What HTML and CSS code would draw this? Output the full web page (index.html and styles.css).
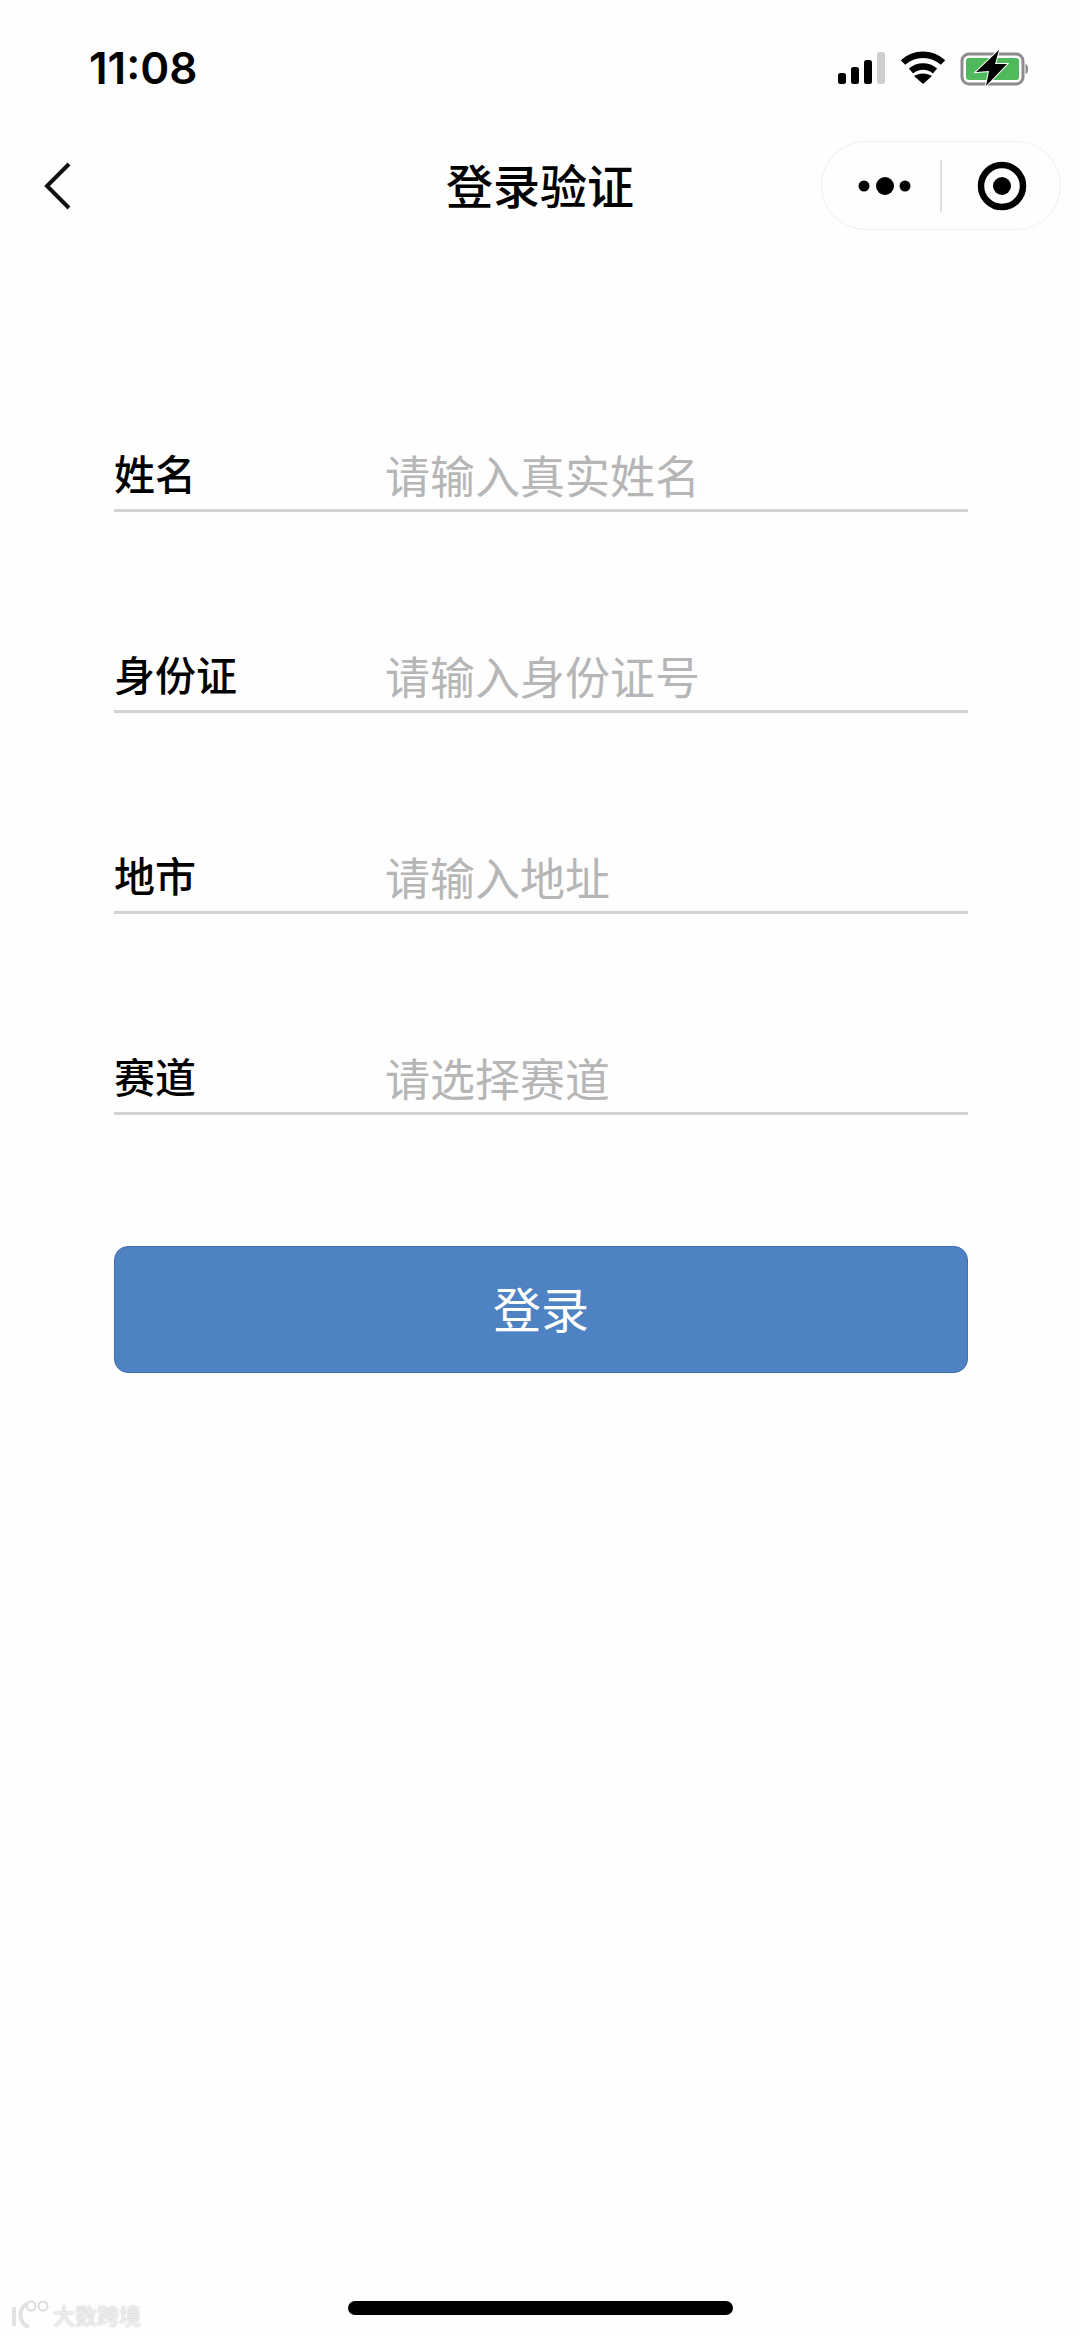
FILE: index.html
```html
<!DOCTYPE html>
<html lang="zh-CN">
<head>
    <meta charset="UTF-8">
    <meta name="viewport" content="width=device-width, initial-scale=1.0">
    <title>登录验证</title>
    <link rel="stylesheet" href="styles.css">
</head>
<body>

    <div class="page">
        <!-- Barra de estado -->
        <div class="status-bar">
            <span class="time">11:08</span>
            <div class="status-icons">
                <svg class="signal" width="48" height="32" viewBox="0 0 48 32">
                    <rect x="0" y="21" width="8" height="11" rx="2.5" fill="#000"/>
                    <rect x="13" y="15" width="8" height="17" rx="2.5" fill="#000"/>
                    <rect x="26" y="8" width="8" height="24" rx="2.5" fill="#000"/>
                    <rect x="39" y="0" width="8" height="32" rx="2.5" fill="#cfcfcf"/>
                </svg>
                <svg class="wifi" width="46" height="36" viewBox="0 0 46 36">
                    <path d="M3 12.5C14 2 32 2 43 12.5" fill="none" stroke="#000" stroke-width="6.5"/>
                    <path d="M11 21C18 15 28 15 35 21" fill="none" stroke="#000" stroke-width="6.5"/>
                    <path d="M23 34L14 26C19 22.500 27 22.500 32 26Z" fill="#000"/>
                </svg>
                <svg class="battery" width="72" height="38" viewBox="0 0 72 38">
                    <rect x="2" y="5" width="61" height="30" rx="7" fill="#fff" stroke="#8c8c8c" stroke-width="3"/>
                    <rect x="6" y="9" width="53" height="22" rx="3" fill="#4fb95c"/>
                    <path d="M65.500 15C69 15.500 69 24.500 65.500 25Z" fill="#8c8c8c"/>
                    <path d="M39 1L16 23L29 22L26 37L47 15L35 15Z" fill="#000" stroke="#fff" stroke-width="2" paint-order="stroke"/>
                </svg>
            </div>
        </div>

        <!-- Barra de navegacion -->
        <div class="nav-bar">
            <svg class="back" width="28" height="48" viewBox="0 0 28 48">
                <path d="M25 2L3 24L25 46" fill="none" stroke="#111" stroke-width="4"/>
            </svg>
            <h1 class="nav-title">登录验证</h1>
            <div class="capsule">
                <svg class="more" width="60" height="20" viewBox="0 0 60 20">
                    <circle cx="6" cy="10" r="5.500" fill="#000"/>
                    <circle cx="27" cy="10" r="9" fill="#000"/>
                    <circle cx="47" cy="10" r="5.500" fill="#000"/>
                </svg>
                <span class="capsule-line"></span>
                <svg class="target" width="50" height="50" viewBox="0 0 50 50">
                    <circle cx="25" cy="25" r="21" fill="none" stroke="#000" stroke-width="6.500"/>
                    <circle cx="25" cy="25" r="9" fill="#000"/>
                </svg>
            </div>
        </div>

        <!-- Formulario -->
        <div class="form">
            <div class="form-row">
                <span class="form-label">姓名</span>
                <span class="form-hint">请输入真实姓名</span>
            </div>
            <div class="form-row">
                <span class="form-label">身份证</span>
                <span class="form-hint">请输入身份证号</span>
            </div>
            <div class="form-row">
                <span class="form-label">地市</span>
                <span class="form-hint">请输入地址</span>
            </div>
            <div class="form-row">
                <span class="form-label">赛道</span>
                <span class="form-hint">请选择赛道</span>
            </div>
            <button class="login-btn">登录</button>
        </div>

        <!-- Marca de agua -->
        <div class="watermark">
            <svg width="40" height="30" viewBox="0 0 40 30">
                <path d="M4 8V27M17 5C8 9 8 24 19 28" fill="none" stroke="#e2e2e2" stroke-width="4"/>
                <circle cx="21" cy="7" r="4.500" fill="none" stroke="#dcdcdc" stroke-width="2"/>
                <circle cx="33" cy="7" r="4.500" fill="none" stroke="#dcdcdc" stroke-width="2"/>
            </svg>
            <span class="watermark-text">大数跨境</span>
        </div>

        <div class="home-bar"></div>
    </div>

</body>
</html>
```

FILE: styles.css
```css
body {
    margin: 0;
    padding: 0;
    background-color: #ffffff;
    font-family: "Noto Sans CJK SC", "Noto Sans", sans-serif;
}

.page {
    position: relative;
    width: 1080px;
    height: 2337px;
    overflow: hidden;
    background-color: #fefefe;
}

/* Barra de estado */
.status-bar {
    display: flex;
    justify-content: space-between;
    align-items: center;
    height: 136px;
    padding: 0 48px 0 89px;
}

.time {
    font-family: Inter, "Liberation Sans", sans-serif;
    font-size: 44px;
    font-weight: 600;
    color: #000;
}

.status-icons {
    display: flex;
    align-items: center;
    gap: 14px;
}

/* Barra de navegacion */
.nav-bar {
    position: relative;
    display: flex;
    justify-content: center;
    align-items: center;
    height: 100px;
}

.back {
    position: absolute;
    left: 44px;
    top: 26px;
}

.nav-title {
    margin: 0 0 5px;
    font-size: 47px;
    font-weight: 500;
    line-height: 60px;
    color: #000;
}

.capsule {
    position: absolute;
    left: 821px;
    top: 5px;
    display: flex;
    align-items: center;
    box-sizing: border-box;
    width: 240px;
    height: 89px;
    padding-left: 36px;
    border: 1px solid #efefef;
    border-radius: 45px;
}

.capsule-line {
    width: 2px;
    height: 52px;
    margin: 0 35px 0 22px;
    background-color: #dddddd;
}

/* Formulario */
.form {
    display: flex;
    flex-direction: column;
    margin: 204px 112px 0 114px;
}

.form-row {
    display: flex;
    align-items: center;
    box-sizing: border-box;
    height: 72px;
    margin-bottom: 129px;
    padding-bottom: 6px;
    border-bottom: 3px solid #d4d4d4;
}

.form-label {
    width: 271px;
    font-size: 41px;
    font-weight: 500;
    color: #000;
}

.form-hint {
    padding-top: 5px;
    font-size: 45px;
    color: #b6b6b6;
}

.login-btn {
    height: 127px;
    margin-top: 2px;
    padding: 0 0 6px;
    border: 1px solid #3f6fac;
    border-radius: 14px;
    background-color: #4f82c3;
    font-family: inherit;
    font-size: 48px;
    font-weight: 400;
    color: #ffffff;
}

/* Marca de agua y barra inferior */
.watermark {
    position: absolute;
    left: 10px;
    top: 2299px;
    display: flex;
    align-items: center;
    gap: 3px;
}

.watermark-text {
    font-size: 22px;
    line-height: 30px;
    color: #eeeeee;
    text-shadow: 0 0 2px #b5b5b5;
}

.home-bar {
    position: absolute;
    left: 348px;
    top: 2301px;
    width: 385px;
    height: 14px;
    border-radius: 7px;
    background-color: #000;
}
```
